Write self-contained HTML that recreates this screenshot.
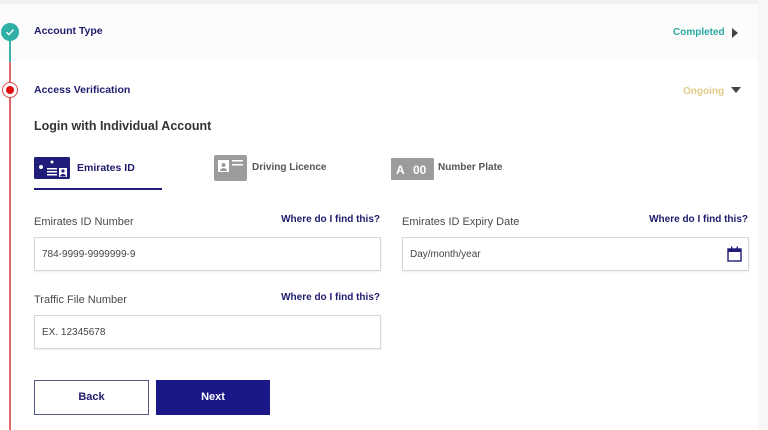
<!DOCTYPE html>
<html><head><meta charset="utf-8"><style>
*{margin:0;padding:0;box-sizing:border-box}
body{width:768px;height:430px;overflow:hidden;background:#fff;font-family:"Liberation Sans",sans-serif;position:relative}
.a{position:absolute;white-space:nowrap}
.nav{color:#1f1c6e;font-weight:bold;font-size:10px}
.lbl{color:#4a4a4a;font-size:11px}
.inp{position:absolute;height:34px;border:1px solid #d6d6dc;background:#fff;box-shadow:0 1px 2px rgba(0,0,0,.08);font-size:10px;color:#444;padding-left:7px;line-height:33px}
</style></head><body>
<div class="a" style="left:0;top:0;width:768px;height:4px;background:#f1f1f3"></div>
<div class="a" style="left:0;top:4px;width:768px;height:56px;background:#fcfcfd"></div>
<div class="a" style="left:758px;top:0;width:10px;height:430px;background:#f7f7f8"></div>
<div class="a" style="left:9px;top:32px;width:2px;height:30px;background:#3bb3aa"></div>
<div class="a" style="left:9px;top:62px;width:2px;height:368px;background:#e06a6a"></div>
<div class="a" style="left:1px;top:23px;width:18px;height:18px;border-radius:50%;background:#2fb0a6"></div>
<svg class="a" style="left:1px;top:23px" width="18" height="18"><path d="M5.5 9.2l2.4 2.4 4.6-5" stroke="#fff" stroke-width="1.4" fill="none"/></svg>
<div class="a" style="left:2px;top:82px;width:16px;height:16px;border-radius:50%;background:#fff;border:1.5px solid #d94a4a"></div>
<div class="a" style="left:6px;top:86px;width:8px;height:8px;border-radius:50%;background:#e01010"></div>
<div class="a nav" style="left:34px;top:25px;font-size:10.5px">Account Type</div>
<div class="a nav" style="left:34px;top:84px;font-size:10.5px">Access Verification</div>
<div class="a" style="left:673px;top:27px;font-size:10px;font-weight:bold;color:#2aa9a0">Completed</div>
<svg class="a" style="left:731px;top:28px" width="8" height="10"><path d="M1 0L7 5L1 10Z" fill="#444"/></svg>
<div class="a" style="left:683px;top:86px;font-size:10px;font-weight:bold;color:#e0cc8a">Ongoing</div>
<svg class="a" style="left:731px;top:87px" width="10" height="7"><path d="M0 0H10L5 6Z" fill="#444"/></svg>
<div class="a" style="left:34px;top:119px;font-size:12.5px;font-weight:bold;color:#333">Login with Individual Account</div>
<svg class="a" style="left:34px;top:157px" width="36" height="22"><rect width="36" height="22" rx="1.5" fill="#1f1c7a"/><circle cx="7" cy="10" r="2" fill="#fff"/><circle cx="18" cy="5" r="1.5" fill="#fff"/><rect x="13" y="11" width="10" height="1.5" fill="#fff"/><rect x="13" y="14" width="10" height="1.5" fill="#fff"/><rect x="13" y="17" width="10" height="1.5" fill="#fff"/><rect x="25" y="11" width="8" height="9" fill="#fff"/><circle cx="29" cy="14" r="1.6" fill="#1f1c7a"/><path d="M26 19.5a3 2.5 0 0 1 6 0z" fill="#1f1c7a"/></svg>
<div class="a nav" style="left:77px;top:162px;font-size:10.5px">Emirates ID</div>
<div class="a" style="left:34px;top:188px;width:128px;height:2px;background:#1f1c7a"></div>
<svg class="a" style="left:214px;top:155px" width="33" height="26"><rect width="33" height="26" rx="2" fill="#9c9c9c"/><rect x="4" y="5" width="11" height="12" fill="#fff"/><circle cx="9.5" cy="10" r="2" fill="#9c9c9c"/><path d="M6 16a3.5 3 0 0 1 7 0z" fill="#9c9c9c"/><rect x="18" y="5" width="11" height="1.5" fill="#fff"/><rect x="18" y="9" width="11" height="1.5" fill="#fff"/></svg>
<div class="a" style="left:252px;top:162px;font-size:10px;font-weight:bold;color:#555">Driving Licence</div>
<svg class="a" style="left:391px;top:158px" width="43" height="22"><rect width="43" height="22" rx="1" fill="#9c9c9c"/><text x="5" y="16" font-family="Liberation Sans" font-weight="bold" font-size="12" fill="#fff">A</text><text x="22" y="16" font-family="Liberation Sans" font-weight="bold" font-size="12" fill="#fff">00</text></svg>
<div class="a" style="left:438px;top:162px;font-size:10px;font-weight:bold;color:#555">Number Plate</div>
<div class="a lbl" style="left:34px;top:216px">Emirates ID Number</div>
<div class="a nav" style="right:388px;top:214px">Where do I find this?</div>
<div class="inp" style="left:34px;top:237px;width:347px">784-9999-9999999-9</div>
<div class="a lbl" style="left:402px;top:216px">Emirates ID Expiry Date</div>
<div class="a nav" style="right:20px;top:214px">Where do I find this?</div>
<div class="inp" style="left:402px;top:237px;width:347px">Day/month/year</div>
<svg class="a" style="left:727px;top:246px" width="15" height="16"><rect x="1" y="3" width="13" height="12" fill="none" stroke="#1f1c7a" stroke-width="1.4"/><rect x="1" y="3" width="13" height="3" fill="#1f1c7a"/><rect x="4" y="0.5" width="1.4" height="4" fill="#1f1c7a"/><rect x="9.6" y="0.5" width="1.4" height="4" fill="#1f1c7a"/></svg>
<div class="a lbl" style="left:34px;top:294px">Traffic File Number</div>
<div class="a nav" style="right:388px;top:292px">Where do I find this?</div>
<div class="inp" style="left:34px;top:315px;width:347px">EX. 12345678</div>
<div class="a" style="left:34px;top:380px;width:115px;height:35px;border:1px solid #555a80;background:#fff;color:#1f1c6e;font-weight:bold;font-size:11px;text-align:center;line-height:33px">Back</div>
<div class="a" style="left:156px;top:380px;width:114px;height:35px;background:#1a1888;color:#fff;font-weight:bold;font-size:11px;text-align:center;line-height:35px">Next</div>
</body></html>
